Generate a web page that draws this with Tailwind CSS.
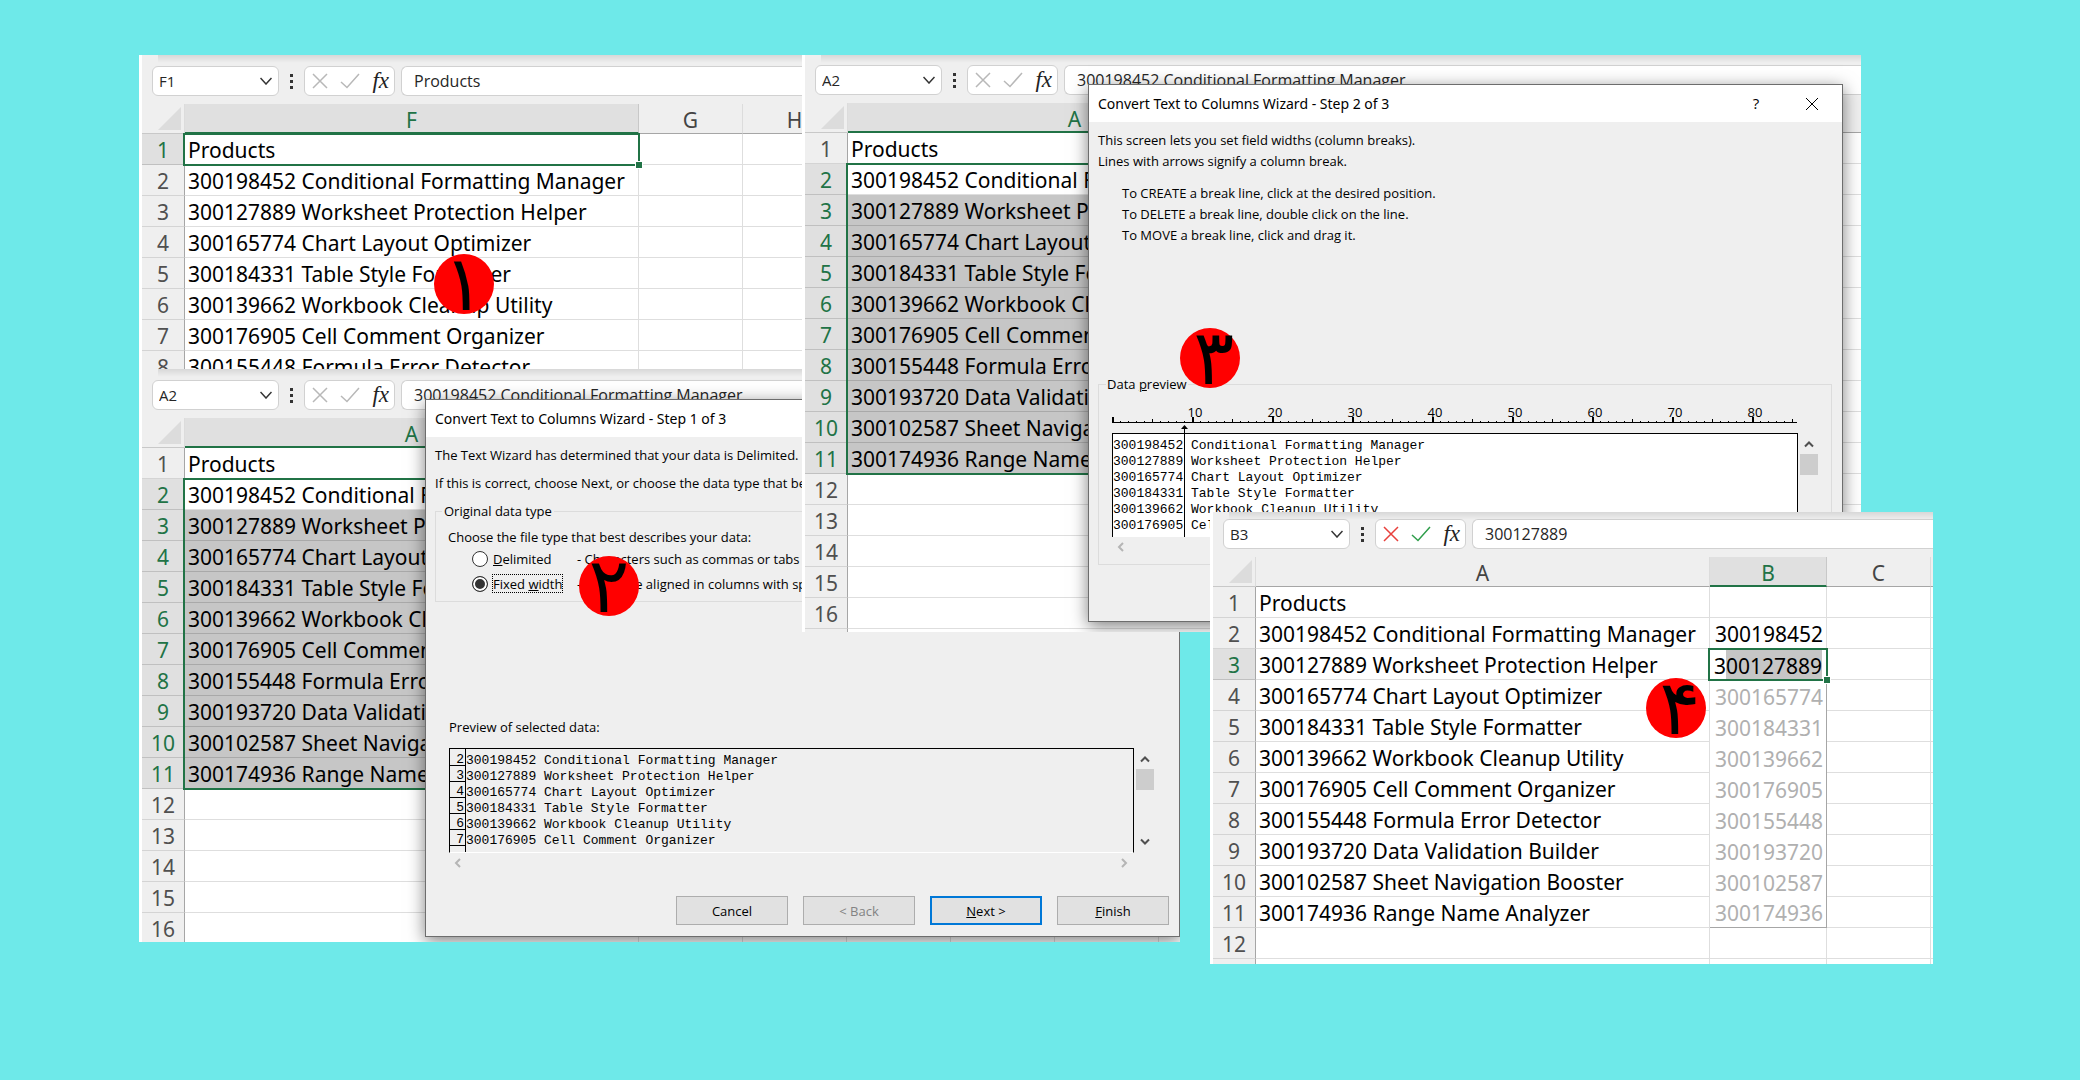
<!DOCTYPE html>
<html lang="en">
<head>
    <meta charset="UTF-8">
    <meta name="viewport" content="width=device-width, initial-scale=1.0">
    <title>Text to Columns - Steps</title>
    <script src="https://cdn.jsdelivr.net/npm/@tailwindcss/browser@4"></script>
</head>
<body class="bg-[#6ee9e9] font-['Open_Sans','Noto_Sans',sans-serif] text-black">
    <main class="relative min-h-screen overflow-hidden">

        <!-- 1: source column -->
        <section class="absolute left-[139px] top-[55px] w-[664px] h-[314px] overflow-hidden bg-[#efefef] border-l-[3px] border-white">
            <div data-bar="F1" data-formula="Products" class="pt-[11px] pb-2"></div>
            <div data-sheet="one" class="relative"></div>
        </section>

        <!-- 2: wizard step 1 -->
        <section class="absolute left-[139px] top-[369px] w-[1041px] h-[573px] overflow-hidden bg-[#efefef] border-l-[3px] border-white">
            <div data-bar="A2" data-formula="300198452 Conditional Formatting Manager" class="pt-[11px] pb-2"></div>
            <div data-sheet="two" class="relative"></div>

            <div role="dialog" aria-labelledby="wizard1" class="absolute left-[283px] top-[30px] w-[755px] bg-[#efefef] border border-[#6d6d6d] shadow-[0_4px_16px_rgba(0,0,0,0.5)] text-[13px] leading-5">
                <div class="flex items-center h-[37px] px-[9px] bg-white">
                    <h2 id="wizard1" class="font-['Noto_Sans',sans-serif] text-sm">Convert Text to Columns Wizard - Step 1 of 3</h2>
                </div>
                <div class="pl-[9px] pr-2 pt-2 pb-[11px]">
                    <p class="whitespace-nowrap">The Text Wizard has determined that your data is Delimited.</p>
                    <p class="whitespace-nowrap mt-2">If this is correct, choose Next, or choose the data type that best describes your data.</p>
                    <fieldset class="mt-[9px] pl-3 pb-1 border border-[#dcdcdc]">
                        <legend class="-ml-1.5 px-0.5 leading-[18px]">Original data type</legend>
                        <p class="mt-[7px]">Choose the file type that best describes your data:</p>
                        <div class="flex items-center h-6 pl-6">
                            <input type="radio" name="kind" id="delimited" class="appearance-none size-4 rounded-full border border-[#333] bg-white">
                            <label for="delimited" class="ml-[5px] w-[84px]"><u>D</u>elimited</label>
                            <span class="whitespace-nowrap">- Characters such as commas or tabs separate each field.</span>
                        </div>
                        <div class="flex items-center h-[26px] pl-6">
                            <input type="radio" name="kind" id="fixed" checked class="appearance-none size-4 rounded-full border border-[#333] bg-[#333] shadow-[inset_0_0_0_2px_white]">
                            <div class="ml-1 w-[85px]"><label for="fixed" class="inline-block h-[19px] leading-[18px] border border-dotted border-black whitespace-nowrap">Fixed <u>w</u>idth</label></div>
                            <span class="whitespace-nowrap">- Fields are aligned in columns with spaces between each field.</span>
                        </div>
                    </fieldset>
                    <p class="mt-[115px] pl-[14px]">Preview of selected data:</p>
                    <div class="flex mt-[11px] pl-[14px]">
                        <div class="flex flex-1 h-[105px] overflow-hidden border-t border-x border-black border-b border-b-white font-['Liberation_Mono',monospace] text-[13px]">
                            <ol data-numbers class="w-4 pt-px border-r border-black text-right"></ol>
                            <ul data-lines class="pt-1"></ul>
                        </div>
                        <div class="flex flex-col items-center w-5 ml-px mr-4 py-1.5">
                            <svg class="w-[10px] h-[10px]" viewBox="0 0 10 10" fill="none" stroke="#505050" stroke-width="2"><path d="M1 7.5 5 3.5 9 7.5"/></svg>
                            <div class="w-[18px] h-[21px] mt-[5px] bg-[#cdcdcd]"></div>
                            <svg class="w-[10px] h-[10px] mt-auto" viewBox="0 0 10 10" fill="none" stroke="#505050" stroke-width="2"><path d="M1 2.5 5 6.5 9 2.5"/></svg>
                        </div>
                    </div>
                    <div class="flex justify-between items-center h-[19px] pl-[18px] pr-[42px]">
                        <svg class="w-[10px] h-[10px]" viewBox="0 0 10 10" fill="none" stroke="#b5b5b5" stroke-width="2"><path d="M7 1 3 5 7 9"/></svg>
                        <svg class="w-[10px] h-[10px]" viewBox="0 0 10 10" fill="none" stroke="#b5b5b5" stroke-width="2"><path d="M3 1 7 5 3 9"/></svg>
                    </div>
                    <div class="flex justify-end gap-[15px] mt-6 pr-[2px]">
                        <button class="w-28 h-[29px] bg-[#e1e1e1] border border-[#adadad]">Cancel</button>
                        <button disabled class="w-28 h-[29px] bg-[#e1e1e1] border border-[#adadad] text-[#838383]">&lt; Back</button>
                        <button class="w-28 h-[29px] bg-[#e1e1e1] border-2 border-[#0078d7]"><u>N</u>ext &gt;</button>
                        <button class="w-28 h-[29px] bg-[#e1e1e1] border border-[#adadad]"><u>F</u>inish</button>
                    </div>
                </div>
            </div>
        </section>

        <!-- 3: wizard step 2 -->
        <section class="absolute left-[802px] top-[55px] w-[1059px] h-[577px] overflow-hidden bg-[#efefef] border-l-[3px] border-white">
            <div data-bar="A2" data-formula="300198452 Conditional Formatting Manager" class="pt-[10px] pb-2"></div>
            <div data-sheet="three" class="relative"></div>

            <div role="dialog" aria-labelledby="wizard2" class="absolute left-[283px] top-[29px] w-[755px] bg-[#efefef] border border-[#6d6d6d] shadow-[0_4px_16px_rgba(0,0,0,0.5)] text-[13px] leading-[21px]">
                <div class="flex items-center h-[37px] px-[9px] bg-white">
                    <h2 id="wizard2" class="flex-1 font-['Noto_Sans',sans-serif] text-sm">Convert Text to Columns Wizard - Step 2 of 3</h2>
                    <button class="w-5 text-[15px]">?</button>
                    <button aria-label="Close" class="ml-[39px] mr-[14px]">
                        <svg class="w-[14px] h-[14px]" viewBox="0 0 14 14" stroke="black"><path d="M1 1 13 13M13 1 1 13"/></svg>
                    </button>
                </div>
                <div class="pl-[9px] pr-2 pt-2 pb-14">
                    <p>This screen lets you set field widths (column breaks).</p>
                    <p>Lines with arrows signify a column break.</p>
                    <div class="mt-[11px] pl-6">
                        <p>To CREATE a break line, click at the desired position.</p>
                        <p>To DELETE a break line, double click on the line.</p>
                        <p>To MOVE a break line, click and drag it.</p>
                    </div>
                    <fieldset class="mt-[129px] mr-[2px] pl-[13px] pb-[7px] border border-[#dcdcdc]">
                        <legend class="-ml-1.5 px-px leading-[18px]">Data <u>p</u>review</legend>
                        <svg id="ruler" class="block w-[686px] h-10 overflow-visible" viewBox="0 0 686 40"></svg>
                        <div class="flex">
                            <div class="relative w-[686px] h-[104px] bg-white border-t border-x border-black font-['Liberation_Mono',monospace] text-[13px]">
                                <ul data-lines class="h-full overflow-hidden pt-1"></ul>
                                <svg class="absolute left-[67px] -top-[9px] w-[9px] h-28" viewBox="0 0 9 112"><path d="M4.500 0 8 4H1ZM4 3H5V112H4Z"/></svg>
                            </div>
                            <div class="flex flex-col items-center w-5 ml-px py-1.5">
                                <svg class="w-[10px] h-[10px]" viewBox="0 0 10 10" fill="none" stroke="#505050" stroke-width="2"><path d="M1 7.500 5 3.500 9 7.500"/></svg>
                                <div class="w-[18px] h-[21px] mt-[5px] bg-[#cdcdcd]"></div>
                            </div>
                        </div>
                        <div class="flex items-center h-5 pl-1">
                            <svg class="w-[10px] h-[10px]" viewBox="0 0 10 10" fill="none" stroke="#b5b5b5" stroke-width="2"><path d="M7 1 3 5 7 9"/></svg>
                        </div>
                    </fieldset>
                </div>
            </div>
        </section>

        <!-- 4: flash fill -->
        <section class="absolute left-[1210px] top-[512px] w-[723px] h-[452px] overflow-hidden bg-[#efefef] border-l-[3px] border-white">
            <div data-bar="B3" data-formula="300127889" data-editing="1" class="pt-[7px] pb-2"></div>
            <div data-sheet="four" class="relative"></div>
        </section>

        <!-- step badges -->
        <div class="absolute left-[434px] top-[254px] flex justify-center items-center size-[60px] rounded-full bg-[#ff0000] font-['DejaVu_Sans',sans-serif] text-[76px] leading-none">۱</div>
        <div class="absolute left-[579px] top-[556px] flex justify-center items-center size-[60px] rounded-full bg-[#ff0000] font-['DejaVu_Sans',sans-serif] text-[76px] leading-none">۲</div>
        <div class="absolute left-[1180px] top-[328px] flex justify-center items-center size-[60px] pl-2 rounded-full bg-[#ff0000] font-['DejaVu_Sans',sans-serif] text-[76px] leading-none">۳</div>
        <div class="absolute left-[1646px] top-[678px] flex justify-center items-center size-[60px] pl-2 rounded-full bg-[#ff0000] font-['DejaVu_Sans',sans-serif] text-[76px] leading-none">۴</div>
    </main>

    <script>
        const products = [
            '300198452 Conditional Formatting Manager',
            '300127889 Worksheet Protection Helper',
            '300165774 Chart Layout Optimizer',
            '300184331 Table Style Formatter',
            '300139662 Workbook Cleanup Utility',
            '300176905 Cell Comment Organizer',
            '300155448 Formula Error Detector',
            '300193720 Data Validation Builder',
            '300102587 Sheet Navigation Booster',
            '300174936 Range Name Analyzer'
        ];

        const sheets = {
            one:   { cols: [['F', 454], ['G', 104], ['H', 104]], rows: 8, activeCol: 'F', from: 1, to: 1 },
            two:   { cols: [['A', 454], ['B', 104], ['C', 104], ['D', 104], ['E', 104], ['F', 104], ['G', 104]], rows: 16, activeCol: 'A', from: 2, to: 11 },
            three: { cols: [['A', 454], ['B', 104], ['C', 104], ['D', 104], ['E', 104], ['F', 104], ['G', 104]], rows: 17, activeCol: 'A', from: 2, to: 11 },
            four:  { cols: [['A', 454], ['B', 117], ['C', 104], ['D', 104]], rows: 13, activeCol: 'B', from: 3, to: 3, fill: true }
        };

        // Formula bars
        document.querySelectorAll('[data-bar]').forEach(bar => {
            const editing = bar.dataset.editing;
            bar.innerHTML = `
                <div class="absolute inset-x-0 top-0 ml-4 h-2 bg-linear-to-b from-black/10 to-transparent"></div>
                <div class="flex items-center h-[30px] pl-[10px] text-base text-[#262626]">
                    <div class="flex items-center w-[127px] h-[30px] px-1.5 rounded-md border border-[#d1d1d1] bg-white">
                        <input aria-label="Name box" value="${bar.dataset.bar}" class="flex-1 min-w-0 text-[15px] outline-none">
                        <svg class="w-3 h-2" viewBox="0 0 12 8" fill="none" stroke="#333" stroke-width="1.500"><path d="M0.500 1 6 7 11.500 1"/></svg>
                    </div>
                    <svg class="w-1 h-4 ml-[11px] mr-[10px]" viewBox="0 0 4 16" fill="#333"><path d="M0 1H3V4H0ZM0 7H3V10H0ZM0 13H3V16H0Z"/></svg>
                    <div class="flex items-center justify-between w-[91px] h-[30px] pl-[7px] pr-[5px] rounded-md border border-[#d1d1d1] bg-white">
                        <button aria-label="Cancel entry"><svg class="w-4 h-4" viewBox="0 0 16 16" fill="none" stroke="${editing ? '#e8403c' : '#b8b8b8'}" stroke-width="1.500"><path d="M1 1 15 15M15 1 1 15"/></svg></button>
                        <button aria-label="Enter"><svg class="w-5 h-4" viewBox="0 0 20 16" fill="none" stroke="${editing ? '#2f9e4b' : '#b8b8b8'}" stroke-width="1.500"><path d="M1 9 7 14.500 19 1"/></svg></button>
                        <button aria-label="Insert function" class="font-['Liberation_Serif',serif] italic text-[23px] leading-5 text-[#222]">fx</button>
                    </div>
                    <input aria-label="Formula" value="${bar.dataset.formula}" class="flex-1 ml-[6px] h-[30px] pl-3 rounded-l-md border border-r-0 border-[#d1d1d1] bg-white outline-none">
                </div>`;
        });

        // Worksheets
        function cell(sheet, col, r) {
            const first = col === sheet.cols[0][0];
            const inFill = sheet.fill && col === 'B' && r > 1 && r < 12;
            const picked = !sheet.fill && col === sheet.activeCol && r > 2 && r <= sheet.to;
            let text = '';
            if (first) text = r === 1 ? 'Products' : (products[r - 2] || '');
            if (inFill) text = products[r - 2].split(' ')[0];
            if (inFill && r === 3) {
                return `<td class="p-0 h-[31px] text-right"><span>3</span><span class="inline-block h-[30px] leading-8 mr-[5px] bg-[#c6c6c6]">${text.slice(1)}</span></td>`;
            }
            if (inFill && r > 3) {
                return `<td class="pr-[3px] pt-0.5 h-[31px] text-right text-[#b0b0b0] border-r border-r-[#a6a6a6]${r === 11 ? ' border-b border-b-[#a6a6a6]' : ''}">${text}</td>`;
            }
            if (inFill) return `<td class="pr-[3px] pt-0.5 h-[31px] text-right border-b border-r border-[#dedede]">${text}</td>`;
            return picked
                ? `<td class="pl-[3px] pt-0.5 h-[31px] border-b border-r border-[#a9a9a9] bg-[#c6c6c6]">${text}</td>`
                : `<td class="pl-[3px] pt-0.5 h-[31px] border-b border-r border-[#dedede]">${text}</td>`;
        }

        document.querySelectorAll('[data-sheet]').forEach(box => {
            const sheet = sheets[box.dataset.sheet];
            const total = 43 + sheet.cols.reduce((sum, c) => sum + c[1], 0);
            let html = `<table class="table-fixed border-separate border-spacing-0 bg-white font-['Noto_Sans',sans-serif] text-[21px] leading-7 whitespace-nowrap" style="width:${total}px">
                <colgroup><col style="width:43px">${sheet.cols.map(c => `<col style="width:${c[1]}px">`).join('')}</colgroup>
                <thead class="text-[#444]"><tr>
                <td class="p-0 h-[30px] bg-[#efefef] border-r border-b border-r-[#dcdcdc] border-b-[#c8c8c8]"><svg class="ml-4 w-6 h-6" viewBox="0 0 24 24" fill="#dcdcdc"><path d="M23 0V23H0Z"/></svg></td>`;
            sheet.cols.forEach(([name]) => {
                html += name === sheet.activeCol
                    ? `<th scope="col" class="h-[30px] p-0 pt-1 font-normal leading-6 bg-[#e0e0e0] text-[#217346] border-r border-r-[#c8c8c8] border-b-2 border-b-[#217346]">${name}</th>`
                    : `<th scope="col" class="h-[30px] p-0 pt-1 font-normal leading-[25px] bg-[#efefef] border-r border-r-[#dcdcdc] border-b border-b-[#a6a6a6]">${name}</th>`;
            });
            html += '</tr></thead><tbody>';
            for (let r = 1; r <= sheet.rows; r++) {
                html += '<tr>' + (r >= sheet.from && r <= sheet.to
                    ? `<th scope="row" class="h-[31px] p-0 pt-0.5 font-normal bg-[#e0e0e0] text-[#217346] border-b border-r border-b-[#c0c0c0] border-r-[#a6a6a6]">${r}</th>`
                    : `<th scope="row" class="h-[31px] p-0 pt-0.5 font-normal bg-[#efefef] text-[#505050] border-b border-r border-b-[#d4d4d4] border-r-[#a6a6a6]">${r}</th>`);
                html += sheet.cols.map(c => cell(sheet, c[0], r)).join('') + '</tr>';
            }
            html += '</tbody></table>';

            // selection frame with its fill handle
            const index = sheet.cols.findIndex(c => c[0] === sheet.activeCol);
            const left = 43 + sheet.cols.slice(0, index).reduce((sum, c) => sum + c[1], 0);
            const top = 30 + 31 * (sheet.from - 1);
            html += `<div class="absolute border-2 border-[#217346]" style="left:${left - 2}px;top:${top - 1}px;width:${sheet.cols[index][1] + 3}px;height:${31 * (sheet.to - sheet.from + 1) + 2}px">
                <div class="absolute -right-[4px] -bottom-[4px] size-[6px] bg-[#217346] outline outline-white"></div></div>`;
            box.innerHTML = html;
        });

        // Wizard previews
        document.querySelectorAll('[data-lines]').forEach(list => {
            list.innerHTML = products.slice(0, 6).map(p => `<li class="h-4 leading-4 whitespace-pre">${p}</li>`).join('');
        });
        document.querySelector('[data-numbers]').innerHTML =
            [2, 3, 4, 5, 6, 7].map(n => `<li class="h-4 pt-1 pr-px leading-[12px] border-b border-black">${n}</li>`).join('');

        // Ruler ticks, one every 8px
        let ruler = '<path d="M0 29H685" stroke="black" transform="translate(0 .5)"/>';
        for (let i = 0; i <= 85; i++) {
            const h = i % 10 === 0 ? 5 : i % 5 === 0 ? 3 : 1;
            ruler += `<rect x="${i * 8}" y="${29 - h}" width="${i % 10 === 0 ? 2 : 1}" height="${h}"/>`;
            if (i && i % 10 === 0) ruler += `<text x="${i * 8 + 3}" y="24" font-size="13" text-anchor="middle">${i}</text>`;
        }
        document.getElementById('ruler').innerHTML = ruler;
    </script>
</body>
</html>
